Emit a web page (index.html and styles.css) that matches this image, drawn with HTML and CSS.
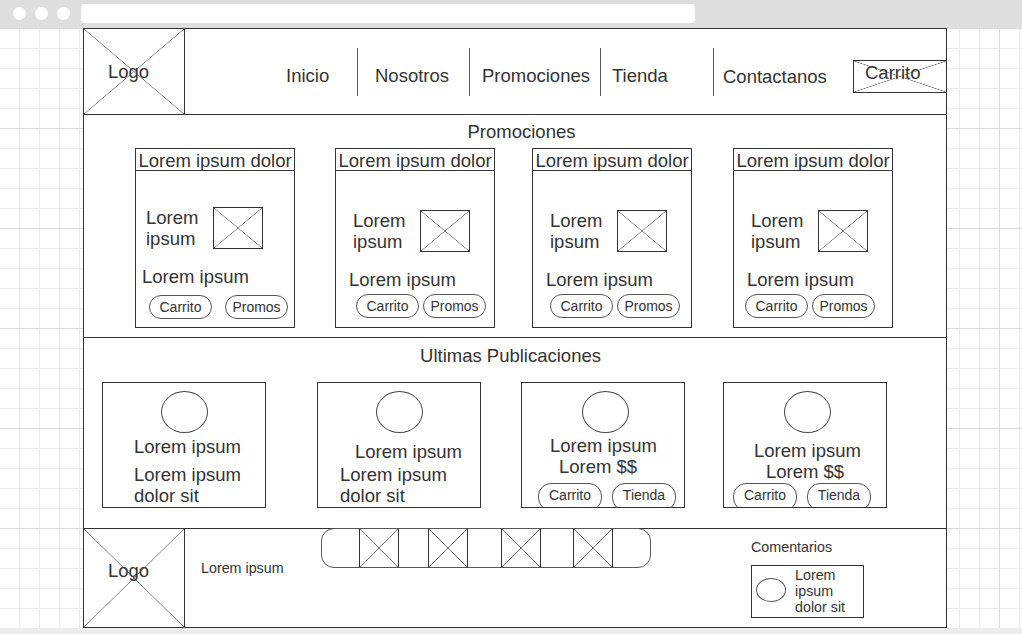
FILE: index.html
```html
<!DOCTYPE html>
<html lang="es">
<head>
<meta charset="utf-8">
<title>Wireframe</title>
<link rel="stylesheet" href="styles.css">
</head>
<body>
<div class="chrome">
  <span class="dot"></span><span class="dot"></span><span class="dot"></span>
  <div class="url"></div>
</div>
<div class="canvas">
  <div class="frame">
    <header class="header">
      <div class="logo xbox">Logo</div>
      <nav class="nav">
        <a class="nav-item n1">Inicio</a>
        <a class="nav-item n2">Nosotros</a>
        <a class="nav-item n3">Promociones</a>
        <a class="nav-item n4">Tienda</a>
        <a class="nav-item n5">Contactanos</a>
      </nav>
      <div class="cart xbox">Carrito</div>
    </header>

    <section class="promos">
      <h2 class="sec-title">Promociones</h2>
      <div class="cards">
        <div class="card">
          <div class="card-h">Lorem ipsum dolor</div>
          <div class="card-row"><div class="card-txt">Lorem ipsum</div><div class="img xbox"></div></div>
          <div class="card-sub">Lorem ipsum</div>
          <div class="btns"><span class="pill">Carrito</span><span class="pill">Promos</span></div>
        </div>
        <div class="card">
          <div class="card-h">Lorem ipsum dolor</div>
          <div class="card-row"><div class="card-txt">Lorem ipsum</div><div class="img xbox"></div></div>
          <div class="card-sub">Lorem ipsum</div>
          <div class="btns"><span class="pill">Carrito</span><span class="pill">Promos</span></div>
        </div>
        <div class="card">
          <div class="card-h">Lorem ipsum dolor</div>
          <div class="card-row"><div class="card-txt">Lorem ipsum</div><div class="img xbox"></div></div>
          <div class="card-sub">Lorem ipsum</div>
          <div class="btns"><span class="pill">Carrito</span><span class="pill">Promos</span></div>
        </div>
        <div class="card">
          <div class="card-h">Lorem ipsum dolor</div>
          <div class="card-row"><div class="card-txt">Lorem ipsum</div><div class="img xbox"></div></div>
          <div class="card-sub">Lorem ipsum</div>
          <div class="btns"><span class="pill">Carrito</span><span class="pill">Promos</span></div>
        </div>
      </div>
    </section>

    <section class="pubs">
      <h2 class="sec-title">Ultimas Publicaciones</h2>
      <div class="pub-row">
        <div class="pub">
          <div class="circle"></div>
          <div class="l1">Lorem ipsum</div>
          <div class="desc">Lorem ipsum dolor sit</div>
        </div>
        <div class="pub">
          <div class="circle"></div>
          <div class="l1">Lorem ipsum</div>
          <div class="desc">Lorem ipsum dolor sit</div>
        </div>
        <div class="pub">
          <div class="circle"></div>
          <div class="l1">Lorem ipsum</div>
          <div class="l2">Lorem $$</div>
          <div class="pbtns"><span class="ppill">Carrito</span><span class="ppill">Tienda</span></div>
        </div>
        <div class="pub">
          <div class="circle"></div>
          <div class="l1">Lorem ipsum</div>
          <div class="l2">Lorem $$</div>
          <div class="pbtns"><span class="ppill">Carrito</span><span class="ppill">Tienda</span></div>
        </div>
      </div>
    </section>

    <footer class="footer">
      <div class="flogo xbox">Logo</div>
      <div class="florem">Lorem ipsum</div>
      <div class="slider">
        <div class="slide xbox"></div>
        <div class="slide xbox"></div>
        <div class="slide xbox"></div>
        <div class="slide xbox"></div>
      </div>
      <div class="comments">
        <div class="ctitle">Comentarios</div>
        <div class="cbox">
          <div class="ell"></div>
          <div class="ctext">Lorem ipsum dolor sit</div>
        </div>
      </div>
    </footer>
  </div>
</div>
<div class="status"></div>
</body>
</html>
```
FILE: styles.css
```css
* { box-sizing: border-box; margin: 0; padding: 0; }

body {
  width: 1022px;
  height: 634px;
  overflow: hidden;
  font-family: "Liberation Sans", Arial, sans-serif;
  color: #333;
  background: #fff;
}

/* browser chrome */
.chrome {
  height: 28px;
  background: #dedede;
  display: flex;
  align-items: flex-start;
  padding: 7px 0 0 13px;
}
.dot {
  width: 13px;
  height: 13px;
  border-radius: 50%;
  background: #fff;
  margin-right: 9px;
  flex: none;
}
.url {
  width: 614px;
  height: 19px;
  background: #fff;
  border-radius: 4px;
  margin: -3px 0 0 2px;
}

/* grid canvas */
.canvas {
  height: 600px;
  padding-left: 83px;
  background-color: #fff;
  background-image:
    linear-gradient(to right, #dadada 1px, transparent 1px),
    linear-gradient(to bottom, #dadada 1px, transparent 1px),
    linear-gradient(to right, #ebebeb 1px, transparent 1px),
    linear-gradient(to bottom, #ebebeb 1px, transparent 1px);
  background-size: 100px 100px, 100px 100px, 20px 20px, 20px 20px;
  background-position: -1px 0, -1px 0, -1px 0, -1px 0;
}
.status {
  height: 6px;
  background: #ececec;
}

/* crossed placeholder box */
.xbox {
  background:
    linear-gradient(to top right, transparent calc(50% - 0.6px), #6a6a6a 50%, transparent calc(50% + 0.6px)),
    linear-gradient(to top left, transparent calc(50% - 0.6px), #6a6a6a 50%, transparent calc(50% + 0.6px));
  background-color: #fff;
}

.frame {
  width: 864px;
  height: 600px;
  border: 1px solid #333;
  background: #fff;
  display: flex;
  flex-direction: column;
}

/* header */
.header {
  height: 86px;
  border-bottom: 1px solid #333;
  display: flex;
  flex: none;
}
.logo {
  width: 101px;
  border-right: 1px solid #333;
  display: flex;
  align-items: center;
  padding-left: 24px;
  font-size: 18.5px;
}
.nav {
  display: flex;
  margin-left: 101px;
}
.nav-item {
  height: 48px;
  margin-top: 19px;
  font-size: 18.5px;
  line-height: 21px;
  padding-top: 17px;
  white-space: nowrap;
}
.n1 { width: 71px; }
.n2 { width: 112px; border-left: 1px solid #555; padding-left: 17px; }
.n3 { width: 131px; border-left: 1px solid #555; padding-left: 12px; }
.n4 { width: 113px; border-left: 1px solid #555; padding-left: 11px; }
.n5 { width: 140px; border-left: 1px solid #555; padding-left: 9px; }
.n5 { padding-top: 18px; }
.cart {
  width: 93px;
  height: 33px;
  margin-top: 31px;
  border: 1px solid #333;
  border-right: none;
  font-size: 18.5px;
  line-height: 21px;
  padding: 1px 0 0 11px;
}

/* section titles */
.sec-title {
  font-size: 18.5px;
  font-weight: normal;
  line-height: 21px;
  text-align: center;
}

/* promociones */
.promos {
  height: 223px;
  border-bottom: 1px solid #333;
  padding-top: 6px;
  flex: none;
}
.promos .sec-title { padding-left: 13px; }
.cards {
  display: flex;
  padding-left: 51px;
  margin-top: 6px;
}
.card {
  width: 160px;
  height: 180px;
  border: 1px solid #333;
  display: flex;
  flex-direction: column;
  flex: none;
  font-size: 18.5px;
}
.card:nth-child(2) { margin-left: 40px; }
.card:nth-child(3) { margin-left: 37px; }
.card:nth-child(4) { margin-left: 41px; }
.card-h {
  height: 22px;
  border-bottom: 1px solid #333;
  line-height: 23px;
  text-align: center;
  white-space: nowrap;
}
.card-row {
  display: flex;
  margin-top: 39px;
  padding-left: 17px;
}
.card-txt {
  width: 67px;
  line-height: 21px;
}
.img {
  width: 50px;
  height: 42px;
  border: 1px solid #333;
}
.card-sub {
  line-height: 21px;
  padding-left: 13px;
  margin-top: 17px;
}
.btns {
  display: flex;
  gap: 4px;
  padding-left: 20px;
  margin-top: 4px;
}
.card:nth-child(1) .card-row { margin-top: 36px; padding-left: 10px; }
.card:nth-child(1) .card-sub { padding-left: 6px; }
.card:nth-child(1) .btns { margin-top: 8px; padding-left: 13px; gap: 13px; }
.card:nth-child(3) .btns { padding-left: 17px; }
.card:nth-child(4) .btns { padding-left: 11px; }
.pill {
  width: 63px;
  height: 24px;
  border: 1px solid #555;
  border-radius: 12px;
  font-size: 14px;
  line-height: 22px;
  text-align: center;
}

/* publicaciones */
.pubs {
  height: 191px;
  border-bottom: 1px solid #333;
  padding-top: 7px;
  flex: none;
}
.pubs .sec-title { padding-right: 9px; }
.pub-row {
  display: flex;
  padding-left: 18px;
  margin-top: 16px;
}
.pub {
  width: 164px;
  height: 126px;
  border: 1px solid #333;
  overflow: hidden;
  flex: none;
  font-size: 18.5px;
  line-height: 21px;
}
.pub:nth-child(2) { margin-left: 51px; }
.pub:nth-child(3) { margin-left: 40px; }
.pub:nth-child(4) { margin-left: 38px; }
.circle {
  width: 47px;
  height: 42px;
  border: 1px solid #444;
  border-radius: 50%;
  margin: 8px 0 0 58px;
}
.pub:nth-child(n+3) .circle { margin-left: 60px; }
.l1, .l2 { white-space: nowrap; }
.pub:nth-child(1) .l1 { margin-top: 3px; padding-left: 31px; }
.pub:nth-child(1) .desc { margin-top: 7px; padding-left: 31px; }
.pub:nth-child(2) .l1 { margin-top: 8px; padding-left: 37px; }
.pub:nth-child(2) .desc { margin-top: 2px; padding-left: 22px; }
.pub:nth-child(3) .l1 { margin-top: 2px; padding-left: 28px; }
.pub:nth-child(3) .l2 { padding-left: 37px; }
.pub:nth-child(3) .pbtns { margin-top: 6px; padding-left: 16px; }
.pub:nth-child(4) .l1 { margin-top: 7px; padding-left: 30px; }
.pub:nth-child(4) .l2 { padding-left: 42px; }
.pub:nth-child(4) .pbtns { margin-top: 1px; padding-left: 9px; }
.pbtns {
  display: flex;
  gap: 10px;
}
.ppill {
  width: 64px;
  height: 28px;
  border: 1px solid #555;
  border-radius: 13px;
  font-size: 14px;
  line-height: 22px;
  text-align: center;
}

/* footer */
.footer {
  flex: 1;
  display: flex;
}
.flogo {
  width: 101px;
  border-right: 1px solid #333;
  padding: 31px 0 0 24px;
  font-size: 18.5px;
  line-height: 21px;
  flex: none;
}
.florem {
  width: 83px;
  margin-left: 16px;
  padding-top: 31px;
  font-size: 14.3px;
  line-height: 16px;
  white-space: nowrap;
  flex: none;
}
.slider {
  width: 330px;
  height: 40px;
  margin: -1px 0 0 37px;
  border: 1px solid #555;
  border-radius: 13px;
  display: flex;
  flex: none;
}
.slide {
  width: 40px;
  height: 100%;
  border-left: 1px solid #333;
  border-right: 1px solid #333;
  flex: none;
}
.slide:nth-child(1) { margin-left: 37px; }
.slide:nth-child(2) { margin-left: 29px; }
.slide:nth-child(3) { margin-left: 33px; }
.slide:nth-child(4) { margin-left: 32px; }
.comments {
  margin-left: 100px;
  padding-top: 10px;
}
.ctitle {
  font-size: 14.3px;
  line-height: 16px;
}
.cbox {
  width: 113px;
  height: 53px;
  margin-top: 10px;
  border: 1px solid #333;
  display: flex;
  align-items: flex-start;
  padding-left: 4px;
}
.ell {
  width: 30px;
  height: 24px;
  margin-top: 12px;
  border: 1px solid #555;
  border-radius: 50%;
  flex: none;
}
.ctext {
  width: 68px;
  margin-left: 9px;
  padding-top: 1px;
  font-size: 14.3px;
  line-height: 16px;
}
```
